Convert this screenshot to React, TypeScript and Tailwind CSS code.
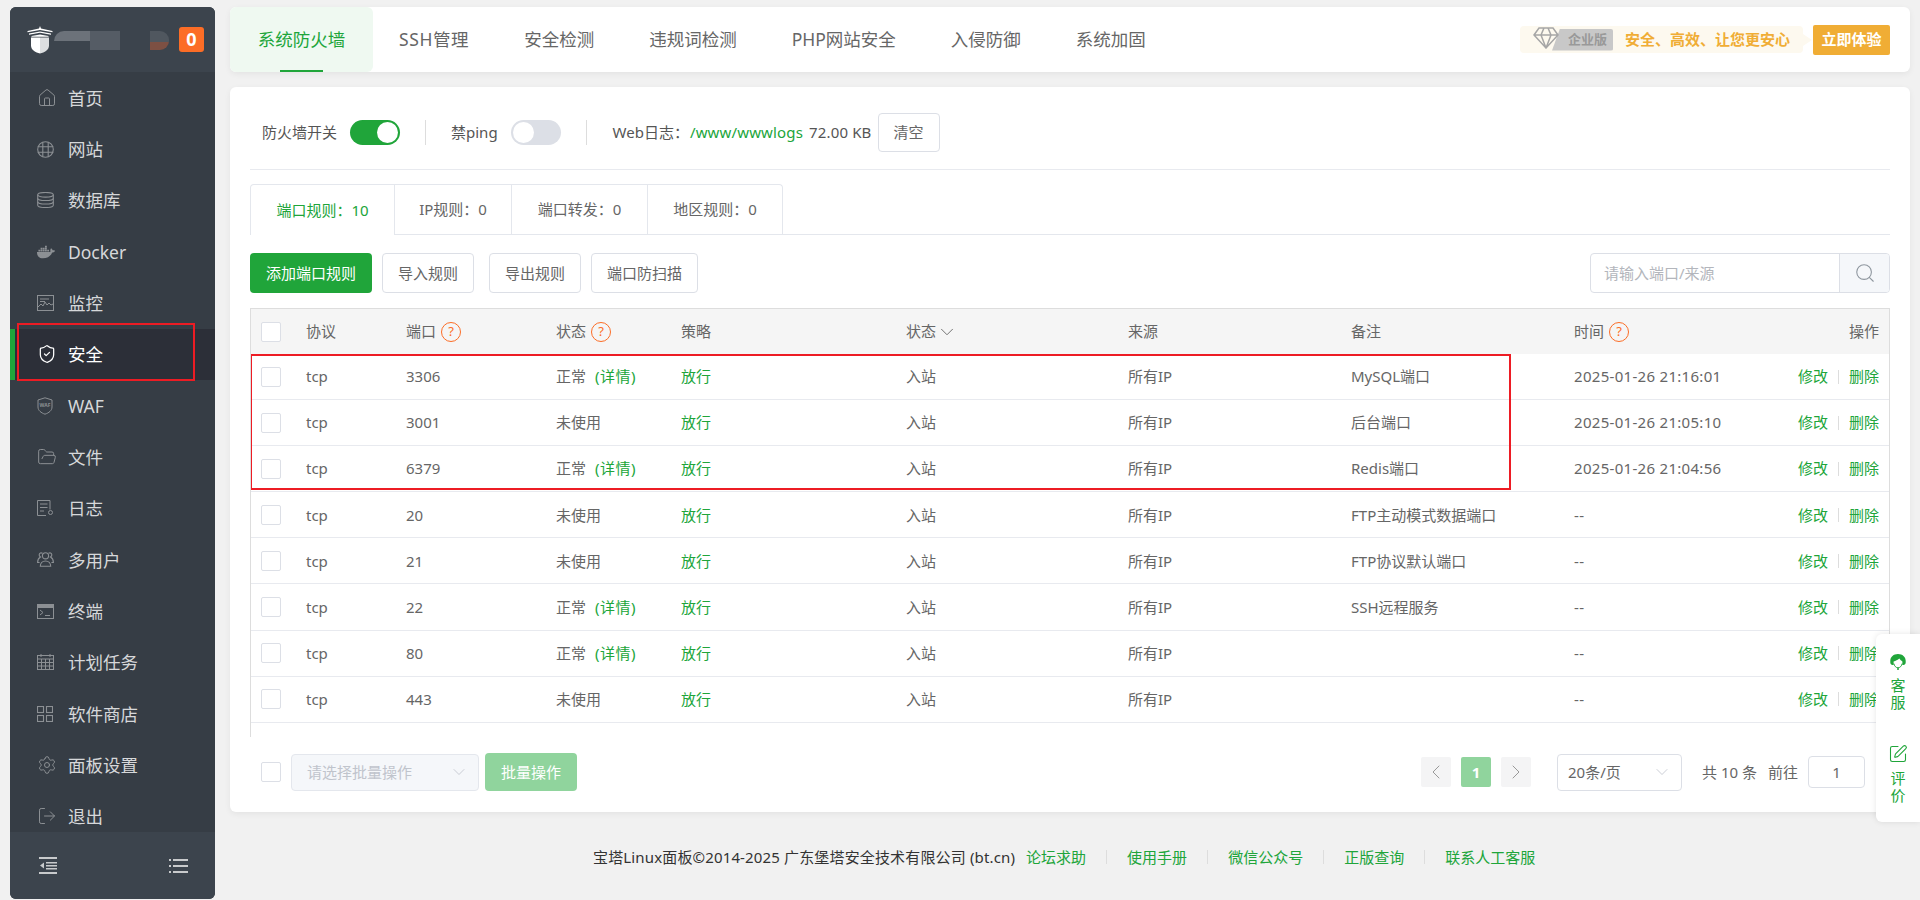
import React from 'react';
import {
  ChevronDown,
  ChevronLeft,
  ChevronRight,
  FolderOpen,
  House,
  LogOut,
  Search,
  Settings,
  ShieldCheck,
  SquarePen,
} from 'lucide-react';
import { FaDocker } from 'react-icons/fa';

function GlobeIcon() {
  return (
    <svg width="17" height="17" viewBox="0 0 17 17" fill="none" stroke="currentColor" strokeWidth="1.100">
      <circle cx="8.500" cy="8.500" r="7.800" />
      <path d="M.7 5.800h15.600M.7 11.200h15.600M5.800 1.200v14.600M11.200 1.200v14.600" />
    </svg>
  );
}

function DatabaseIcon() {
  return (
    <svg width="17" height="16" viewBox="0 0 17 16" fill="none" stroke="currentColor" strokeWidth="1.100">
      <ellipse cx="8.500" cy="2.800" rx="7.800" ry="2.300" />
      <path d="M.7 2.800v10.400c0 1.300 3.500 2.300 7.800 2.300s7.800-1 7.800-2.300V2.800" />
      <path d="M.7 6.200c0 1.300 3.500 2.300 7.800 2.300s7.800-1 7.800-2.300M.7 9.700c0 1.300 3.500 2.300 7.800 2.300s7.800-1 7.800-2.300" />
    </svg>
  );
}

function UsersIcon() {
  return (
    <svg width="17" height="15" viewBox="0 0 17 15" fill="none" stroke="currentColor" strokeWidth="1.100">
      <circle cx="8.500" cy="3.800" r="3.100" />
      <path d="M3.300 14.300c0-3.300 2.300-5.300 5.200-5.300s5.200 2 5.200 5.300z" />
      <path d="M5.500 1.300C4 .4 2.500 1 2.200 2.500c-.2 1.100.3 2 1.300 2.500C1.800 5.900.6 7.700.6 10.500h2M11.500 1.300c1.500-.9 3-.3 3.300 1.200.2 1.100-.3 2-1.300 2.500 1.700.9 2.900 2.700 2.900 5.500h-2" />
    </svg>
  );
}

function GridIcon() {
  return (
    <svg width="16" height="16" viewBox="0 0 16 16" fill="none" stroke="currentColor" strokeWidth="1.100">
      <rect x="0.5" y="0.5" width="6" height="6" />
      <rect x="9.500" y="0.5" width="6" height="6" />
      <rect x="0.5" y="9.500" width="6" height="6" />
      <rect x="9.500" y="9.500" width="6" height="6" />
    </svg>
  );
}

function MonitorIcon() {
  return (
    <svg width="17" height="16" viewBox="0 0 17 16" fill="none" stroke="currentColor" strokeWidth="1">
      <rect x="0.5" y="0.5" width="16" height="15" />
      <path d="M3 4h9M3 6.500h5M1 12l3-3 2 2 2-4 2 3 2-2 2 2 2-1" />
    </svg>
  );
}

function WafIcon() {
  return (
    <svg width="16" height="18" viewBox="0 0 16 18" fill="none" stroke="currentColor" strokeWidth="1">
      <path d="M8 .8 15 3v7c0 3.500-3 5.800-7 7.200C4 15.800 1 13.500 1 10V3z" />
      <text x="8" y="10" textAnchor="middle" fontSize="5" fontWeight="700" fill="currentColor" stroke="none">WAF</text>
    </svg>
  );
}

function LogIcon() {
  return (
    <svg width="17" height="16" viewBox="0 0 17 16" fill="none" stroke="currentColor" strokeWidth="1">
      <path d="M9 15.500H.5V.5h12.500v9" />
      <path d="M3 4h7.500M3 7.500h7.500M3 11h4" />
      <circle cx="13.500" cy="12.500" r="2" />
    </svg>
  );
}

function TerminalIcon() {
  return (
    <svg width="17" height="15" viewBox="0 0 17 15" fill="none" stroke="currentColor" strokeWidth="1">
      <rect x="0.5" y="0.5" width="16" height="14" />
      <rect x="0.5" y="0.5" width="16" height="3" fill="currentColor" />
      <path d="m3 6 3 2.500L3 11M8 11.500h5" />
    </svg>
  );
}

function CalendarIcon() {
  return (
    <svg width="17" height="16" viewBox="0 0 17 16" fill="none" stroke="currentColor" strokeWidth="1">
      <rect x="0.5" y="1.500" width="16" height="14" />
      <path d="M.5 5h16M.5 8.500h16M.5 12h16M4.500 5v10.500M8.500 5v10.500M12.500 5v10.500M4 0v3M13 0v3" />
    </svg>
  );
}

function LogoIcon() {
  return (
    <svg width="26" height="28" viewBox="0 0 26 28" fill="#ffffff" className="shrink-0">
      <path d="M13 0 14 2.500 25.500 5v1.200L13 4 .5 6.200V5L12 2.500z" />
      <path d="M2 7.500 13 5.500l11 2v1.200L13 6.800 2 8.700zM4.500 10 13 8.500l8.500 1.500v.8H4.500z" />
      <path d="M4 11.500h9v16C8.500 26.500 4 24 4 19.500z" />
      <path d="M13 11.500h9v8c0 4.500-4.500 7-9 8z" fill="#dcdee0" />
    </svg>
  );
}

function HeadsetIcon() {
  return (
    <svg width="16" height="16" viewBox="0 0 16 16" fill="none">
      <path d="M8 0C3.600 0 .3 2.900.3 6.800v1.700c0 1.400 1 2.400 2.300 2.400h1V7.600C5.600 7.100 7.800 6 9.300 4.600c.8 1.200 2 2.300 3.100 2.900v3.400h1c1.300 0 2.300-1 2.300-2.400V6.800C15.700 2.900 12.400 0 8 0z" fill="#20a53a" />
      <path d="M3.800 9.500c.5 2.500 2.200 4.300 4.200 4.300s3.700-1.800 4.200-4.300" stroke="#20a53a" />
      <circle cx="8" cy="15" r="1" fill="#20a53a" />
    </svg>
  );
}

function Help() {
  return (
    <span className="ml-[5px] flex h-[20px] w-[20px] items-center justify-center rounded-full border border-[#fc6d26] text-[13px] leading-none text-[#fc6d26]">
      ?
    </span>
  );
}

function Check() {
  return <span className="block h-[20px] w-[20px] rounded-[2px] border border-[#dcdfe6] bg-white" />;
}

const menu: { label: string; icon: React.ReactNode }[] = [
  { label: '首页', icon: <House size={20} strokeWidth={1.2} /> },
  { label: '网站', icon: <GlobeIcon /> },
  { label: '数据库', icon: <DatabaseIcon /> },
  { label: 'Docker', icon: <FaDocker size={18} /> },
  { label: '监控', icon: <MonitorIcon /> },
  { label: '安全', icon: <ShieldCheck size={20} strokeWidth={1.5} /> },
  { label: 'WAF', icon: <WafIcon /> },
  { label: '文件', icon: <FolderOpen size={20} strokeWidth={1.2} /> },
  { label: '日志', icon: <LogIcon /> },
  { label: '多用户', icon: <UsersIcon /> },
  { label: '终端', icon: <TerminalIcon /> },
  { label: '计划任务', icon: <CalendarIcon /> },
  { label: '软件商店', icon: <GridIcon /> },
  { label: '面板设置', icon: <Settings size={20} strokeWidth={1.2} /> },
  { label: '退出', icon: <LogOut size={20} strokeWidth={1.2} /> },
];

const topTabs = ['安全检测', '违规词检测', 'PHP网站安全', '入侵防御', '系统加固'];

const rules = [
  { port: '3306', used: true, remark: 'MySQL端口', time: '2025-01-26 21:16:01' },
  { port: '3001', used: false, remark: '后台端口', time: '2025-01-26 21:05:10' },
  { port: '6379', used: true, remark: 'Redis端口', time: '2025-01-26 21:04:56' },
  { port: '20', used: false, remark: 'FTP主动模式数据端口', time: '--' },
  { port: '21', used: false, remark: 'FTP协议默认端口', time: '--' },
  { port: '22', used: true, remark: 'SSH远程服务', time: '--' },
  { port: '80', used: true, remark: '', time: '--' },
  { port: '443', used: false, remark: '', time: '--' },
];

const rowGrid = 'grid grid-cols-[55px_100px_150px_125px_225px_222px_223px_223px_1fr] items-center';

function Sidebar() {
  return (
    <aside className="relative mt-[7px] ml-[10px] flex h-[892px] w-[205px] shrink-0 flex-col overflow-hidden rounded-[6px] bg-[#363d45] text-[17.5px] text-[#d6d8da]">
      <div className="flex h-[65px] shrink-0 items-center bg-[#3c444d] pl-[17px]">
        <LogoIcon />
        <div className="ml-[1px] flex h-[19px] w-[125px] shrink-0 items-start">
          <span className="mt-[1px] h-[10px] w-[36px] rounded-tl-[10px] bg-[#6c727a]" />
          <span className="mt-[1px] h-[19px] w-[30px] bg-[#555c65]" />
          <span className="mt-[1px] ml-[30px] flex h-[19px] w-[19px] flex-col overflow-hidden rounded-r-[9px]">
            <span className="h-[11px] shrink-0 bg-[#50575f]" />
            <span className="h-[8px] shrink-0 bg-[#7d5043]" />
          </span>
        </div>
        <span className="flex h-[25px] w-[25px] shrink-0 items-center justify-center rounded-[3px] bg-[#fc6d26] text-[18px] font-bold text-white">
          0
        </span>
      </div>
      <nav className="flex-1 overflow-hidden">
        {menu.map((item) =>
          item.label === '安全' ? (
            <div key={item.label} className="flex h-[51.35px] items-center border-l-[5px] border-[#20a53a] bg-[#2c2f38] pl-[22px] text-white">
              <span className="flex w-[31px] items-center">{item.icon}</span>
              {item.label}
            </div>
          ) : (
            <div key={item.label} className="flex h-[51.35px] items-center pl-[27px]">
              <span className="flex w-[31px] items-center text-[#8c9094]">{item.icon}</span>
              {item.label}
            </div>
          ),
        )}
      </nav>
      <div className="flex h-[67px] shrink-0 items-center justify-between bg-[#3c444d] pr-[27px] pl-[29px] text-[#c8cacc]">
        <svg width="18" height="17" viewBox="0 0 18 17" fill="currentColor">
          <path d="M0 0h18v2H0zM7 5h11v1.500H7zM7 8h11v1.500H7zM7 11h11v1.500H7zM0 15h18v2H0zM5 5.500v6L1 8.500z" />
        </svg>
        <svg width="19" height="14" viewBox="0 0 19 14" fill="currentColor">
          <path d="M0 0h2v2H0zM4 0h15v2H4zM0 6h2v2H0zM4 6h15v2H4zM0 12h2v2H0zM4 12h15v2H4z" />
        </svg>
      </div>
      <div className="absolute top-[316px] left-[7px] h-[58px] w-[178px] border-2 border-[#ed1c24]" />
    </aside>
  );
}

function TopBar() {
  return (
    <div className="mt-[7px] flex h-[65px] shrink-0 items-center rounded-[6px] bg-white pr-[20px] text-[17.5px] text-[#666666] shadow-[0_2px_6px_rgba(0,0,0,0.06)]">
      <div className="relative flex h-full w-[143px] items-center justify-center rounded-[6px] bg-[#eff9f1] text-[#20a53a]">
        系统防火墙
        <span className="absolute bottom-0 left-[50px] h-[2px] w-[43px] bg-[#20a53a]" />
      </div>
      <div className="flex items-center gap-[55px] pl-[26px]">
        <span className="tracking-[0.6px]">SSH管理</span>
        {topTabs.map((t) => (
          <span key={t}>{t}</span>
        ))}
      </div>
      <div className="ml-auto flex items-center">
        <div className="relative flex h-[27px] w-[283px] items-center rounded-[4px] bg-[#fdf9ef] pl-[13px] text-[15px] font-bold text-[#f0ad35]">
          <svg width="26" height="22" viewBox="0 0 26 22" fill="none" stroke="#a6a6a6" strokeWidth="1.500" className="z-10 -mt-[4px] shrink-0">
            <path d="M6 1h14l5 7-12 13L1 8zM1 8h24M8 8l5 13 5-13-3-7h-4z" />
          </svg>
          <span className="-ml-[7px] flex h-[22px] w-[61px] items-center justify-end rounded-r-[2px] bg-[#c8c8c8] pr-[6px] text-[13px] text-[#999999] [clip-path:polygon(8px_0,100%_0,100%_100%,0_100%)]">
            企业版
          </span>
          <span className="ml-[12px]">安全、高效、让您更安心</span>
          <span className="absolute top-[8px] -right-[9px] h-0 w-0 border-y-[6px] border-l-[9px] border-y-transparent border-l-[#fdf9ef]" />
        </div>
        <span className="ml-[10px] flex h-[30px] w-[77px] items-center justify-center rounded-[2px] bg-[#f0ad35] text-[15px] font-bold text-white">
          立即体验
        </span>
      </div>
    </div>
  );
}

function Toggle({ on }: { on: boolean }) {
  return on ? (
    <span className="flex h-[25px] w-[50px] items-center justify-end rounded-full bg-[#20a53a] pr-[2px]">
      <span className="h-[21px] w-[21px] rounded-full bg-white" />
    </span>
  ) : (
    <span className="flex h-[25px] w-[50px] items-center rounded-full bg-[#dcdfe6] pl-[2px]">
      <span className="h-[21px] w-[21px] rounded-full bg-white" />
    </span>
  );
}

function OutlineButton({ label, width }: { label: string; width: string }) {
  return (
    <span className={`flex h-[40px] items-center justify-center rounded-[4px] border border-[#dcdfe6] bg-white text-[#666666] ${width}`}>
      {label}
    </span>
  );
}

function RulesTable() {
  return (
    <div className="relative mt-[15px] h-[429px] shrink-0 overflow-hidden border-x border-t border-[#dddddd] text-[#666666]">
      <div className={`${rowGrid} h-[45px] bg-[#f5f5f5]`}>
        <span className="pl-[10px]"><Check /></span>
        <span>协议</span>
        <span className="flex items-center">端口<Help /></span>
        <span className="flex items-center">状态<Help /></span>
        <span>策略</span>
        <span className="flex items-center">状态<ChevronDown size={22} strokeWidth={1} /></span>
        <span>来源</span>
        <span>备注</span>
        <span className="flex items-center justify-between pr-[10px]">
          <span className="flex items-center">时间<Help /></span>
          <span>操作</span>
        </span>
      </div>
      {rules.map((r) => (
        <div key={r.port} className={`${rowGrid} h-[46.1px] border-b border-[#e8eaef]`}>
          <span className="pl-[10px]"><Check /></span>
          <span>tcp</span>
          <span>{r.port}</span>
          <span>
            {r.used ? '正常' : '未使用'}
            {r.used && <span className="ml-[9px] tracking-[0.5px] text-[#20a53a]">(详情)</span>}
          </span>
          <span className="text-[#20a53a]">放行</span>
          <span>入站</span>
          <span>所有IP</span>
          <span>{r.remark}</span>
          <span className="flex items-center justify-between pr-[10px]">
            <span className="tracking-[0.3px]">{r.time}</span>
            <span className="flex items-center text-[#20a53a]">
              修改
              <span className="mx-[10px] h-[14px] w-px bg-[#dddddd]" />
              删除
            </span>
          </span>
        </div>
      ))}
      <div className="absolute top-[45px] -left-px h-[136px] w-[1261px] border-2 border-[#ed1c24]" />
    </div>
  );
}

function Pager() {
  return (
    <div className="mt-[16px] flex h-[38px] shrink-0 items-center text-[#666666]">
      <span className="pl-[11px]"><Check /></span>
      <span className="ml-[10px] flex h-[37px] w-[188px] items-center justify-between rounded-[4px] border border-[#e4e7ed] bg-[#f5f7fa] pr-[9px] pl-[15px] text-[#c0c4cc]">
        请选择批量操作
        <ChevronDown size={20} strokeWidth={1} />
      </span>
      <span className="ml-[6px] flex h-[38px] w-[92px] items-center justify-center rounded-[4px] bg-[#90d49d] text-white">
        批量操作
      </span>
      <span className="ml-auto flex h-[30px] w-[30px] items-center justify-center rounded-[2px] bg-[#f4f4f5] text-[#999999]">
        <ChevronLeft size={24} strokeWidth={1} />
      </span>
      <span className="ml-[10px] flex h-[30px] w-[30px] items-center justify-center rounded-[2px] bg-[#90d49d] font-bold text-white">
        1
      </span>
      <span className="ml-[10px] flex h-[30px] w-[30px] items-center justify-center rounded-[2px] bg-[#f4f4f5] text-[#999999]">
        <ChevronRight size={24} strokeWidth={1} />
      </span>
      <span className="ml-[26px] flex h-[37px] w-[125px] items-center justify-between rounded-[4px] border border-[#dcdfe6] pr-[9px] pl-[10px]">
        20条/页
        <ChevronDown size={20} strokeWidth={1} className="text-[#c0c4cc]" />
      </span>
      <span className="ml-[20px]">共 10 条</span>
      <span className="ml-[11px]">前往</span>
      <span className="mr-[25px] ml-[10px] flex h-[32px] w-[57px] items-center justify-center rounded-[4px] border border-[#dcdfe6]">
        1
      </span>
    </div>
  );
}

function FloatPanel() {
  return (
    <div className="absolute top-[634px] right-0 flex h-[188px] w-[44px] flex-col items-center rounded-l-[6px] bg-white pt-[20px] text-[15px] leading-[17px] text-[#20a53a] shadow-[0_0_6px_rgba(0,0,0,0.1)]">
      <HeadsetIcon />
      <span className="mt-[7px]">客</span>
      <span>服</span>
      <SquarePen size={20} strokeWidth={1.3} className="mt-[33px]" />
      <span className="mt-[6px]">评</span>
      <span>价</span>
    </div>
  );
}

export default function App() {
  return (
    <div className="relative flex h-[900px] w-[1920px] overflow-hidden bg-[#f1f1f1] text-[15px] [font-family:'Noto_Sans','Noto_Sans_CJK_SC',sans-serif]">
      <Sidebar />
      <main className="ml-[15px] flex w-[1680px] flex-col">
        <TopBar />
        <section className="mt-[15px] flex h-[725px] flex-col rounded-[6px] bg-white px-[20px] shadow-[0_2px_6px_rgba(0,0,0,0.06)]">
          <div className="flex h-[83px] shrink-0 items-center border-b border-[#e8eaef] pt-[10px] pb-[2px] pl-[12px] text-[#555555]">
            <span>防火墙开关</span>
            <span className="ml-[13px]"><Toggle on /></span>
            <span className="ml-[25px] h-[25px] w-px bg-[#dddddd]" />
            <span className="ml-[25px]">禁ping</span>
            <span className="ml-[13px]"><Toggle on={false} /></span>
            <span className="ml-[25px] h-[25px] w-px bg-[#dddddd]" />
            <span className="ml-[26px]">Web日志：</span>
            <span className="ml-[1px] tracking-[0.15px] text-[#20a53a]">/www/wwwlogs</span>
            <span className="ml-[6px] tracking-[0.15px]">72.00 KB</span>
            <span className="ml-[6px] flex h-[39px] w-[62px] items-center justify-center rounded-[4px] border border-[#dcdfe6] text-[#666666]">清空</span>
          </div>
          <div className="mt-[14px] flex h-[51px] shrink-0 border-b border-[#e4e7ed] text-[#666666]">
            <span className="-mb-px flex w-[145px] items-center justify-center rounded-tl-[4px] border-x border-t border-[#e4e7ed] bg-white text-[#20a53a]">端口规则：10</span>
            <span className="flex w-[117px] items-center justify-center border-t border-r border-[#e4e7ed]">IP规则：0</span>
            <span className="flex w-[136px] items-center justify-center border-t border-r border-[#e4e7ed]">端口转发：0</span>
            <span className="flex w-[135px] items-center justify-center rounded-tr-[4px] border-t border-r border-[#e4e7ed]">地区规则：0</span>
          </div>
          <div className="mt-[18px] flex h-[40px] shrink-0 items-center">
            <span className="flex h-[40px] w-[122px] items-center justify-center rounded-[4px] bg-[#20a53a] text-white">添加端口规则</span>
            <span className="ml-[10px]"><OutlineButton label="导入规则" width="w-[92px]" /></span>
            <span className="ml-[15px]"><OutlineButton label="导出规则" width="w-[92px]" /></span>
            <span className="ml-[10px]"><OutlineButton label="端口防扫描" width="w-[107px]" /></span>
            <div className="ml-auto flex h-[40px] w-[300px] overflow-hidden rounded-[4px] border border-[#dcdfe6]">
              <span className="flex flex-1 items-center pl-[13px] text-[#b3b6bc]">请输入端口/来源</span>
              <span className="flex w-[50px] items-center justify-center border-l border-[#dcdfe6] bg-[#f5f7fa] text-[#8f979f]">
                <Search size={22} strokeWidth={1.2} />
              </span>
            </div>
          </div>
          <RulesTable />
          <Pager />
        </section>
        <footer className="flex flex-1 items-center pt-[2px] pl-[363px] text-[#333333]">
          <span className="tracking-[0.15px]">宝塔Linux面板©2014-2025 广东堡塔安全技术有限公司 (bt.cn)</span>
          <span className="ml-[11px] text-[#20a53a]">论坛求助</span>
          <span className="mx-[20px] h-[14px] w-px bg-[#dddddd]" />
          <span className="text-[#20a53a]">使用手册</span>
          <span className="mx-[20px] h-[14px] w-px bg-[#dddddd]" />
          <span className="text-[#20a53a]">微信公众号</span>
          <span className="mx-[20px] h-[14px] w-px bg-[#dddddd]" />
          <span className="text-[#20a53a]">正版查询</span>
          <span className="mx-[20px] h-[14px] w-px bg-[#dddddd]" />
          <span className="text-[#20a53a]">联系人工客服</span>
        </footer>
      </main>
      <FloatPanel />
    </div>
  );
}
